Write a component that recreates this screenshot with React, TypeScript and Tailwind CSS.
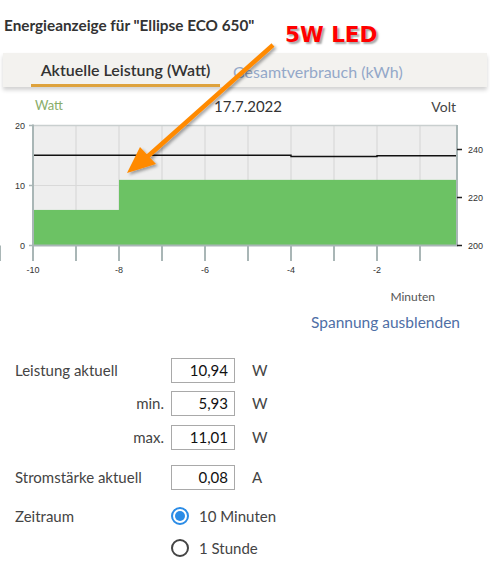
import React from 'react'

const font = { fontFamily: 'Lato, "Open Sans", sans-serif' }

// x position of a minute value on the time axis
const tx = (t: number) => 33 + (t + 10) * 43
// chart y (svg coords) for watts and volts
const wy = (w: number) => 127.5 - w * 6
const vy = (v: number) => 127.5 - (v - 200) * 2.4

function PowerChart() {
  const grid = [1, 2, 3, 4, 5, 6, 7, 8, 9].map((k) => 33 + k * 43)
  const ticks = [0, ...grid]
  return (
    <svg width={490} height={160} className="block">
      <rect x={33} y={7.5} width={424} height={120} fill="#eeeeee" />
      {grid.map((x) => (
        <line key={x} x1={x} y1={7.5} x2={x} y2={127.5} stroke="#d9d9d9" strokeWidth={1.2} />
      ))}
      <line x1={33} y1={wy(10)} x2={457} y2={wy(10)} stroke="#d9d9d9" strokeWidth={1.2} />

      {/* measured power */}
      <rect x={33} y={wy(5.93)} width={tx(-8) - 33} height={127.5 - wy(5.93)} fill="#6cc264" />
      <rect x={tx(-8)} y={wy(10.94)} width={457 - tx(-8)} height={127.5 - wy(10.94)} fill="#6cc264" />

      {/* voltage */}
      <polyline
        points={`33,${vy(237.6)} ${tx(-4)},${vy(237.6)} ${tx(-4)},${vy(237.1)} ${tx(-2)},${vy(237.1)} ${tx(-2)},${vy(237.4)} 457,${vy(237.4)}`}
        fill="none"
        stroke="#111"
        strokeWidth={1.4}
      />

      {/* frame */}
      <line x1={33} y1={7.5} x2={457} y2={7.5} stroke="#c9cfcf" strokeWidth={1.5} />
      <line x1={457} y1={7} x2={457} y2={128} stroke="#a9b6b6" strokeWidth={2} />
      <line x1={33} y1={6.5} x2={33} y2={143} stroke="#a9b6b6" strokeWidth={2} />
      <line x1={32} y1={127.5} x2={458} y2={127.5} stroke="#a9b6b6" strokeWidth={2} />
      {ticks.map((x) => (
        <line key={x} x1={x} y1={127.5} x2={x} y2={143} stroke="#a9b6b6" strokeWidth={2} />
      ))}

      {/* left axis */}
      {[0, 10, 20].map((w) => (
        <g key={w}>
          <line x1={29} y1={wy(w)} x2={33} y2={wy(w)} stroke="#a9b6b6" strokeWidth={1.5} />
          <text x={25} y={wy(w) + 3} textAnchor="end" fontSize={9} fontFamily="Liberation Sans, Arial, sans-serif" fill="#333">
            {w}
          </text>
        </g>
      ))}

      {/* right axis */}
      {[200, 220, 240].map((v) => (
        <g key={v}>
          <line x1={457} y1={vy(v)} x2={462} y2={vy(v)} stroke="#222" strokeWidth={1.5} />
          <text x={468} y={vy(v) + 3} fontSize={9} fontFamily="Liberation Sans, Arial, sans-serif" fill="#333">
            {v}
          </text>
        </g>
      ))}

      {/* time axis */}
      {[-10, -8, -6, -4, -2].map((t) => (
        <text key={t} x={tx(t)} y={155} textAnchor="middle" fontSize={9} fontFamily="Liberation Sans, Arial, sans-serif" fill="#333">
          {t}
        </text>
      ))}
    </svg>
  )
}

function Callout() {
  return (
    <>
      <svg width={490} height={200} className="absolute left-0 top-0 pointer-events-none">
        <defs>
          <filter id="arrow-shadow" x="-20%" y="-20%" width="140%" height="140%">
            <feDropShadow dx={2} dy={2} stdDeviation={1.5} floodColor="#000" floodOpacity={0.35} />
          </filter>
        </defs>
        <g filter="url(#arrow-shadow)">
          <line x1={273} y1={45} x2={146} y2={158} stroke="#ff8a00" strokeWidth={4.5} />
          <polygon points="127,173 140,147 156,164" fill="#ff8a00" />
        </g>
      </svg>
      <div
        className="absolute left-[285px] top-[21px] text-[21.5px] font-bold leading-[28px] text-[#ff0000] [text-shadow:2px_2px_2px_rgba(0,0,0,0.35)]"
        style={{ fontFamily: '"DejaVu Sans", sans-serif' }}
      >
        5W LED
      </div>
    </>
  )
}

function ValueRow({ label, value, unit, right }: { label: string; value: string; unit: string; right?: boolean }) {
  return (
    <div className="flex h-[25px] items-center">
      <div className={`w-[171px] shrink-0 pl-[15px] pr-[7px] text-[15px] text-[#444] ${right ? 'text-right' : ''}`}>{label}</div>
      <div className="flex h-[25px] w-[64px] shrink-0 items-center justify-end border border-[#a9a9a9] pr-[6px] text-[15px] text-[#111]">
        {value}
      </div>
      <div className="pl-[17px] text-[15px] text-[#444]">{unit}</div>
    </div>
  )
}

function Radio({ checked, label }: { checked?: boolean; label: string }) {
  return (
    <div className="flex items-center gap-[10px]">
      {checked ? (
        <span className="flex h-[18px] w-[18px] items-center justify-center rounded-full border-2 border-[#2b8ce6]">
          <span className="h-[10px] w-[10px] rounded-full bg-[#2b8ce6]" />
        </span>
      ) : (
        <span className="h-[18px] w-[18px] rounded-full border-2 border-[#444]" />
      )}
      <span className="text-[15px] text-[#444]">{label}</span>
    </div>
  )
}

export default function App() {
  return (
    <div className="relative h-[569px] w-[490px] overflow-hidden bg-white" style={font}>
      <div className="mt-[15px] pl-[4px] text-[15.3px] font-bold leading-[20px] text-[#333]">
        Energieanzeige für "Ellipse ECO 650"
      </div>

      <div className="mx-[3px] mt-[18px] flex h-[34px] bg-[#f3f2ef] pl-[28px] shadow-[0_3px_4px_rgba(0,0,0,0.18)]">
        <div className="flex w-[189px] items-center justify-center border-b-[3px] border-[#dea23c] pt-[3px] text-[16px] font-semibold text-[#333]">
          Aktuelle Leistung (Watt)
        </div>
        <div className="flex items-center pl-[13px] pt-[3px] text-[16px] text-[#93a8c9]">Gesamtverbrauch (kWh)</div>
      </div>

      <div className="mt-[10px] flex h-[18px] items-center">
        <div className="w-[35px]" />
        <div className="w-[80px] text-[13px] text-[#8aad6a]">Watt</div>
        <div className="w-[266px] text-center text-[15px] text-[#333]">17.7.2022</div>
        <div className="w-[75px] text-right text-[14px] text-[#444]">Volt</div>
      </div>

      <div className="mt-[3px]">
        <PowerChart />
      </div>

      <div className="mt-[10px] flex h-[18px] items-center justify-end pr-[55px] text-[12px] text-[#555]">Minuten</div>

      <div className="mt-[7px] flex h-[20px] items-center justify-end pr-[30px] text-[15.5px] text-[#4f6fa6]">
        Spannung ausblenden
      </div>

      <div className="mt-[25px]">
        <ValueRow label="Leistung aktuell" value="10,94" unit="W" />
      </div>
      <div className="mt-[8px]">
        <ValueRow label="min." value="5,93" unit="W" right />
      </div>
      <div className="mt-[9px]">
        <ValueRow label="max." value="11,01" unit="W" right />
      </div>
      <div className="mt-[15px]">
        <ValueRow label="Stromstärke aktuell" value="0,08" unit="A" />
      </div>

      <div className="mt-[14px] flex h-[24px] items-center">
        <div className="w-[171px] shrink-0 pl-[15px] text-[15px] text-[#444]">Zeitraum</div>
        <Radio checked label="10 Minuten" />
      </div>
      <div className="mt-[8px] flex h-[24px] items-center pl-[171px]">
        <Radio label="1 Stunde" />
      </div>

      <Callout />
    </div>
  )
}
